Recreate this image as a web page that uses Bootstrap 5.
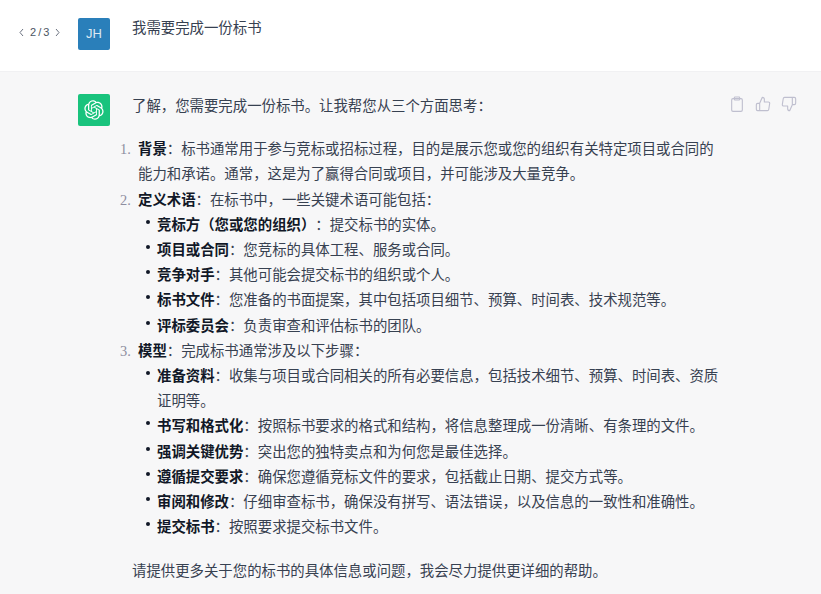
<!doctype html>
<html lang="zh"><head><meta charset="utf-8"><title>标书</title>
<link rel="stylesheet" href="https://cdn.jsdelivr.net/npm/bootstrap@5.3.0/dist/css/bootstrap.min.css">
<style>
html,body{height:594px;overflow:hidden}
body{font-family:"Liberation Sans","Noto Sans CJK SC",sans-serif;font-size:14.4px;line-height:25.2px;color:#374151;background:#f7f7f8;text-spacing-trim:space-all}
.turn-user{height:72px;background:#fff;border-bottom:1px solid #f1f1f3;padding-top:18px}
.turn-bot{padding-top:22px}
.pager{width:78px;padding-left:18px;font-size:11px;color:#4b5563;height:28px;gap:5px;line-height:28px}
.pager svg{width:7px;height:9px}
.pager-num{font-family:"Liberation Sans Narrow","Liberation Sans",sans-serif;font-size:11px;word-spacing:-1px}
.avatar{width:32px;height:32px;border-radius:2px;color:#fff;flex:none;font-size:13px}
.av-user{background:#2a7fba;color:#dbe8f2}
.av-bot{background:#19c37d}
.msg{margin-left:22px;width:590px;flex:none}
.user-line{margin-top:-2px}
.bot-lead{margin-bottom:18px}
.steps{margin:0 0 18.500px -17px;padding-left:23px;width:607px}
.steps>li::marker{color:#8e8ea0;font-family:"Liberation Serif",serif;content:counter(list-item) ".\00a0\00a0"}
.steps ul{padding-left:19px;margin:0;list-style:none}
.steps ul li{position:relative}
.steps ul li::before{content:"";position:absolute;left:-11px;top:7px;width:4px;height:4px;border-radius:50%;background:#111827}
.steps b{color:#111827;font-weight:700}
.tools{gap:10px;margin-left:auto;padding-right:24px;padding-top:2px}
.tools svg{width:16px;height:16px;fill:none;stroke:#bfbfcf;stroke-width:1.7;stroke-linecap:round;stroke-linejoin:round}
</style></head><body>
<div class="turn-user d-flex align-items-start">
  <div class="pager d-flex align-items-center">
    <svg viewBox="0 0 7 9"><path d="M5 1 2 4.500 5 8" fill="none" stroke="#6b7280"/></svg><span class="pager-num">2 / 3</span><svg viewBox="0 0 7 9"><path d="M2 1 5 4.500 2 8" fill="none" stroke="#6b7280"/></svg>
  </div>
  <div class="avatar av-user d-flex align-items-center justify-content-center">JH</div>
  <div class="msg user-line">我需要完成一份标书</div>
</div>
<div class="turn-bot d-flex align-items-start">
  <div class="pager"></div>
  <div class="avatar av-bot d-flex align-items-center justify-content-center">
    <svg width="20" height="20" viewBox="0 0 41 41" fill="#fff"><path d="M37.5324 16.8707C37.9808 15.5241 38.1363 14.0974 37.9886 12.6859C37.8409 11.2744 37.3934 9.91076 36.676 8.68622C35.6126 6.83404 33.9882 5.3676 32.0373 4.4985C30.0864 3.62941 27.9098 3.40259 25.8215 3.85078C24.8796 2.7893 23.7219 1.94125 22.4257 1.36341C21.1295 0.785575 19.7249 0.491269 18.3058 0.500197C16.1708 0.495044 14.0893 1.16803 12.3614 2.42214C10.6335 3.67624 9.34853 5.44666 8.6917 7.47815C7.30085 7.76286 5.98686 8.3414 4.8377 9.17505C3.68854 10.0087 2.73073 11.0782 2.02839 12.312C0.956464 14.1591 0.498905 16.2988 0.721698 18.4228C0.944492 20.5467 1.83612 22.5449 3.268 24.1293C2.81966 25.4759 2.66413 26.9026 2.81182 28.3141C2.95951 29.7256 3.40701 31.0892 4.12437 32.3138C5.18791 34.1659 6.8123 35.6322 8.76321 36.5013C10.7141 37.3704 12.8907 37.5973 14.9789 37.1492C15.9208 38.2107 17.0786 39.0587 18.3747 39.6366C19.6709 40.2144 21.0755 40.5087 22.4946 40.4998C24.6307 40.5054 26.7133 39.8321 28.4418 38.5772C30.1704 37.3223 31.4556 35.5506 32.1119 33.5179C33.5027 33.2332 34.8167 32.6547 35.9659 31.821C37.115 30.9874 38.0728 29.9178 38.7752 28.684C39.8458 26.8371 40.3023 24.6979 40.0789 22.5748C39.8556 20.4517 38.9639 18.4544 37.5324 16.8707ZM22.4978 37.8849C20.7443 37.8874 19.0459 37.2733 17.6994 36.1501C17.7601 36.117 17.8666 36.0586 17.936 36.0161L25.9004 31.4156C26.1003 31.3019 26.2663 31.137 26.3813 30.9378C26.4964 30.7386 26.5563 30.5124 26.5549 30.2825V19.0542L29.9213 20.998C29.9389 21.0068 29.9541 21.0198 29.9656 21.0359C29.977 21.052 29.9842 21.0707 29.9867 21.0902V30.3889C29.9842 32.375 29.1946 34.2791 27.7909 35.6841C26.3872 37.0892 24.4838 37.8806 22.4978 37.8849ZM6.39227 31.0064C5.51397 29.4888 5.19742 27.7107 5.49804 25.9832C5.55718 26.0187 5.66048 26.0818 5.73461 26.1244L13.699 30.7248C13.8975 30.8408 14.1233 30.902 14.3532 30.902C14.583 30.902 14.8088 30.8408 15.0073 30.7248L24.731 25.1103V28.9979C24.7321 29.0177 24.7283 29.0376 24.7199 29.0556C24.7115 29.0736 24.6988 29.0893 24.6829 29.1012L16.6317 33.7497C14.9096 34.7416 12.8643 35.0097 10.9447 34.4954C9.02506 33.9811 7.38785 32.7263 6.39227 31.0064ZM4.29707 13.6194C5.17156 12.0998 6.55279 10.9364 8.19885 10.3327C8.19885 10.4013 8.19491 10.5228 8.19491 10.6071V19.808C8.19351 20.0378 8.25334 20.2638 8.36823 20.4629C8.48312 20.6619 8.64893 20.8267 8.84863 20.9404L18.5723 26.5542L15.206 28.4979C15.1894 28.5089 15.1703 28.5155 15.1505 28.5173C15.1307 28.5191 15.1107 28.516 15.0924 28.5082L7.04046 23.8557C5.32135 22.8601 4.06716 21.2235 3.55289 19.3046C3.03862 17.3858 3.30624 15.3413 4.29707 13.6194ZM31.955 20.0556L22.2312 14.4411L25.5976 12.4981C25.6142 12.4872 25.6333 12.4805 25.6531 12.4787C25.6729 12.4769 25.6928 12.4801 25.7111 12.4879L33.7631 17.1364C34.9967 17.849 36.0017 18.8982 36.6606 20.1613C37.3194 21.4244 37.6047 22.849 37.4832 24.2684C37.3617 25.6878 36.8382 27.0432 35.9743 28.1759C35.1103 29.3086 33.9415 30.1717 32.6047 30.6641C32.6047 30.5947 32.6047 30.4733 32.6047 30.3889V21.188C32.6066 20.9586 32.5474 20.7328 32.4332 20.5338C32.319 20.3348 32.154 20.1698 31.955 20.0556ZM35.3055 15.0128C35.2464 14.9765 35.1431 14.9142 35.069 14.8717L27.1045 10.2712C26.906 10.1554 26.6803 10.0943 26.4504 10.0943C26.2206 10.0943 25.9948 10.1554 25.7963 10.2712L16.0726 15.8858V11.9982C16.0715 11.9783 16.0753 11.9585 16.0837 11.9405C16.0921 11.9225 16.1048 11.9068 16.1207 11.8949L24.1719 7.25025C25.4053 6.53903 26.8158 6.19376 28.2383 6.25482C29.6608 6.31589 31.0364 6.78077 32.2044 7.59508C33.3723 8.40939 34.2842 9.53945 34.8334 10.8531C35.3826 12.1667 35.5464 13.6095 35.3055 15.0128ZM14.2424 21.9419L10.8752 19.9981C10.8576 19.9893 10.8423 19.9763 10.8309 19.9602C10.8195 19.9441 10.8122 19.9254 10.8098 19.9058V10.6071C10.8107 9.18295 11.2173 7.78848 11.9819 6.58696C12.7466 5.38544 13.8377 4.42659 15.1275 3.82264C16.4173 3.21869 17.8524 2.99464 19.2649 3.1767C20.6775 3.35876 22.0089 3.93941 23.1034 4.85067C23.0427 4.88379 22.937 4.94215 22.8668 4.98473L14.9024 9.58517C14.7025 9.69878 14.5366 9.86356 14.4215 10.0626C14.3065 10.2616 14.2466 10.4877 14.2479 10.7175L14.2424 21.9419ZM16.071 17.9991L20.4018 15.4978L24.7325 17.9975V22.9985L20.4018 25.4983L16.071 22.9985V17.9991Z"/></svg>
  </div>
  <div class="msg">
    <p class="bot-lead">了解，您需要完成一份标书。让我帮您从三个方面思考：</p>
    <ol class="steps">
      <li><b>背景</b>：标书通常用于参与竞标或招标过程，目的是展示您或您的组织有关特定项目或合同的能力和承诺。通常，这是为了赢得合同或项目，并可能涉及大量竞争。</li>
      <li><b>定义术语</b>：在标书中，一些关键术语可能包括：
        <ul>
          <li><b>竞标方（您或您的组织）</b>：提交标书的实体。</li>
          <li><b>项目或合同</b>：您竞标的具体工程、服务或合同。</li>
          <li><b>竞争对手</b>：其他可能会提交标书的组织或个人。</li>
          <li><b>标书文件</b>：您准备的书面提案，其中包括项目细节、预算、时间表、技术规范等。</li>
          <li><b>评标委员会</b>：负责审查和评估标书的团队。</li>
        </ul></li>
      <li><b>模型</b>：完成标书通常涉及以下步骤：
        <ul>
          <li><b>准备资料</b>：收集与项目或合同相关的所有必要信息，包括技术细节、预算、时间表、资质证明等。</li>
          <li><b>书写和格式化</b>：按照标书要求的格式和结构，将信息整理成一份清晰、有条理的文件。</li>
          <li><b>强调关键优势</b>：突出您的独特卖点和为何您是最佳选择。</li>
          <li><b>遵循提交要求</b>：确保您遵循竞标文件的要求，包括截止日期、提交方式等。</li>
          <li><b>审阅和修改</b>：仔细审查标书，确保没有拼写、语法错误，以及信息的一致性和准确性。</li>
          <li><b>提交标书</b>：按照要求提交标书文件。</li>
        </ul></li>
    </ol>
    <p class="mb-0">请提供更多关于您的标书的具体信息或问题，我会尽力提供更详细的帮助。</p>
  </div>
  <div class="tools d-flex">
    <svg viewBox="0 0 24 24"><rect x="4" y="4" width="16" height="19" rx="2"/><rect x="8" y="1.500" width="8" height="4.500" rx="1"/></svg>
    <svg viewBox="0 0 24 24"><path d="M7 11l4-9a3 3 0 0 1 3 3v4h6a2 2 0 0 1 2 2.300l-1.400 9a2 2 0 0 1-2 1.700H7zM7 11H4a2 2 0 0 0-2 2v7a2 2 0 0 0 2 2h3"/></svg>
    <svg viewBox="0 0 24 24"><path d="M17 13l-4 9a3 3 0 0 1-3-3v-4H4a2 2 0 0 1-2-2.300l1.400-9a2 2 0 0 1 2-1.700H17zM17 13h3a2 2 0 0 0 2-2V4a2 2 0 0 0-2-2h-3"/></svg>
  </div>
</div>
</body></html>
